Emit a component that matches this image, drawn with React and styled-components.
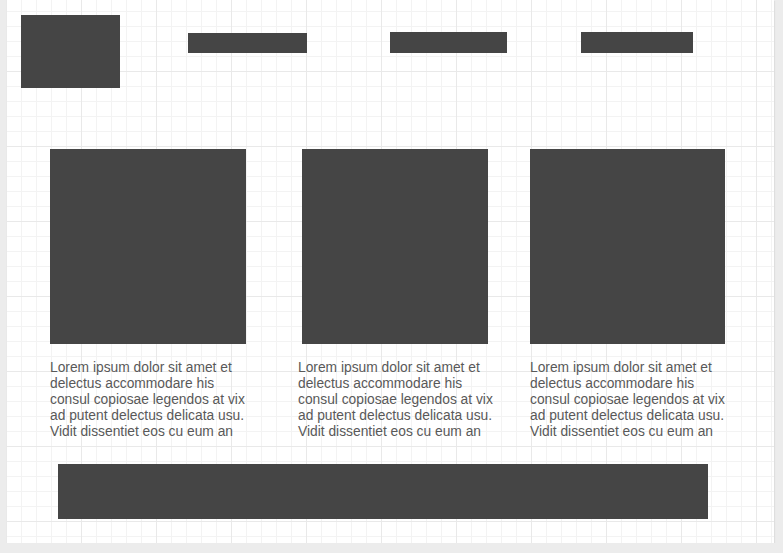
import React from "react";
import styled, { createGlobalStyle } from "styled-components";

const GlobalStyle = createGlobalStyle`
  html, body {
    margin: 0;
    padding: 0;
    background: #ececec;
  }
  body {
    font-family: "Liberation Sans", Arial, sans-serif;
  }
`;

const navItems = [
  { width: 119, height: 20, top: 33, left: 68 },
  { width: 117, height: 21, top: 32, left: 83 },
  { width: 112, height: 21, top: 32, left: 74 },
];

const cards = [
  { imageWidth: 196, left: 44, imageOffset: 0 },
  { imageWidth: 186, left: 52, imageOffset: 4 },
  { imageWidth: 195, left: 36, imageOffset: 0 },
];

const lorem =
  "Lorem ipsum dolor sit amet et delectus accommodare his consul copiosae legendos at vix ad putent delectus delicata usu. Vidit dissentiet eos cu eum an";

const App = () => {
  return (
    <>
      <GlobalStyle />
      <Canvas>
        <Header>
          <Logo />
          <Nav>
            {navItems.map((item, i) => (
              <NavItem
                key={i}
                $width={item.width}
                $height={item.height}
                $top={item.top}
                $left={item.left}
              />
            ))}
          </Nav>
        </Header>
        <Cards>
          {cards.map((card, i) => (
            <Card key={i} $left={card.left}>
              <CardImage $width={card.imageWidth} $offset={card.imageOffset} />
              <CardText>{lorem}</CardText>
            </Card>
          ))}
        </Cards>
        <Footer>
          <FooterBar />
        </Footer>
      </Canvas>
    </>
  );
};

const Canvas = styled.div`
  margin-left: 6px;
  width: 768px;
  height: 543px;
  box-sizing: border-box;
  box-shadow: 1px 1px 1px rgba(0, 0, 0, 0.06);
  background-color: #ffffff;
  background-image:
    linear-gradient(to right, #e9e9e9 1px, transparent 1px),
    linear-gradient(to bottom, #e9e9e9 1px, transparent 1px),
    linear-gradient(to right, #f3f3f3 1px, transparent 1px),
    linear-gradient(to bottom, #f3f3f3 1px, transparent 1px);
  background-size: 75px 75px, 75px 75px, 15px 15px, 15px 15px;
  background-position: 0 0, 0 71px, 0 0, 0 11px;
  display: flex;
  flex-direction: column;
  overflow: hidden;
`;

const Header = styled.header`
  display: flex;
  align-items: flex-start;
  padding: 15px 0 0 15px;
  height: 149px;
  box-sizing: border-box;
  flex-shrink: 0;
`;

const Logo = styled.div`
  width: 99px;
  height: 73px;
  background: #454545;
`;

const Nav = styled.nav`
  display: flex;
  align-items: flex-start;
`;

const NavItem = styled.div`
  width: ${(p) => p.$width}px;
  height: ${(p) => p.$height}px;
  margin-top: ${(p) => p.$top - 15}px;
  margin-left: ${(p) => p.$left}px;
  background: #454545;
`;

const Cards = styled.section`
  display: flex;
  align-items: flex-start;
  height: 315px;
  flex-shrink: 0;
`;

const Card = styled.article`
  width: 196px;
  margin-left: ${(p) => p.$left}px;
  display: flex;
  flex-direction: column;
`;

const CardImage = styled.div`
  width: ${(p) => p.$width}px;
  height: 195px;
  margin-left: ${(p) => p.$offset}px;
  background: #454545;
`;

const CardText = styled.p`
  margin: 16px 0 0;
  font-size: 13.8px;
  line-height: 16px;
  color: #595959;
`;

const Footer = styled.footer`
  display: flex;
  padding-left: 52px;
`;

const FooterBar = styled.div`
  width: 650px;
  height: 55px;
  background: #454545;
`;

export default App;
